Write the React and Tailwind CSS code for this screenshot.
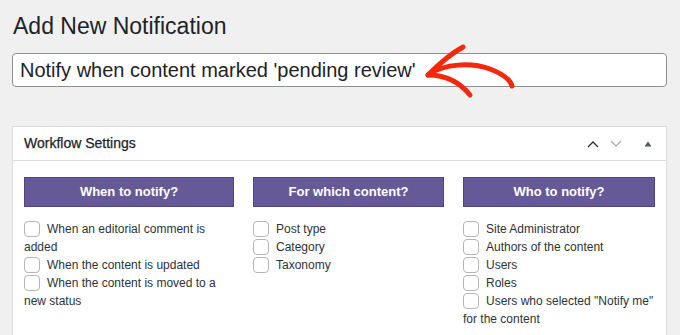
import React from "react";

function Box({ children }) {
  return (
    <div className="leading-[18px]">
      <span className="inline-block w-[16px] h-[16px] align-[-4px] mr-[7px] rounded-[4px] border border-[#b4b5b8] bg-white"></span>
      {children}
    </div>
  );
}

function Col({ title, items }) {
  return (
    <div>
      <div className="h-[30px] flex items-center justify-center bg-[#655997] border border-[#4f4585] text-white font-bold text-[13px]">
        {title}
      </div>
      <div className="mt-[13px] text-[12px] text-[#2c3338]">
        {items.map((t) => (
          <Box key={t}>{t}</Box>
        ))}
      </div>
    </div>
  );
}

export default function App() {
  return (
    <div
      className="w-[680px] h-[335px] overflow-hidden bg-[#f0f0f1] relative"
      style={{ fontFamily: '"Liberation Sans", Arial, sans-serif' }}
    >
      <div className="pl-[12px] pr-[13px]">
        <h1 className="pt-[12px] pl-[1px] text-[23px] leading-[29px] text-[#1d2327] font-normal">
          Add New Notification
        </h1>
        <div className="mt-[12px] h-[34px] bg-white border border-[#8c8f94] rounded-[4px] flex items-center pl-[7px] text-[20px] text-[#1d2327]">
          Notify when content marked 'pending review'
        </div>
        <div className="mt-[39px] bg-white border border-[#dcdcde] h-[260px]">
          <div className="h-[34px] border-b border-[#dcdcde] flex items-center pl-[11px] pr-[14px]">
            <span className="text-[14px] text-[#1d2327] flex-1 [-webkit-text-stroke:0.25px_#1d2327]">Workflow Settings</span>
            <svg width="12" height="8" viewBox="0 0 12 8" className="mr-[11px]">
              <path d="M1 7 L6 2 L11 7" fill="none" stroke="#2c3338" strokeWidth="1.3" />
            </svg>
            <svg width="12" height="8" viewBox="0 0 12 8" className="mr-[22px]">
              <path d="M1 1 L6 6 L11 1" fill="none" stroke="#a7aaad" strokeWidth="1.2" />
            </svg>
            <svg width="8" height="6" viewBox="0 0 8 6">
              <path d="M0.5 5.5 L4 0.5 L7.5 5.5 Z" fill="#50575e" />
            </svg>
          </div>
          <div className="pt-[16px] pl-[11px] grid grid-cols-[210px_191px_192px] gap-x-[19px]">
            <Col
              title="When to notify?"
              items={[
                "When an editorial comment is added",
                "When the content is updated",
                "When the content is moved to a new status",
              ]}
            />
            <Col title="For which content?" items={["Post type", "Category", "Taxonomy"]} />
            <Col
              title="Who to notify?"
              items={[
                "Site Administrator",
                "Authors of the content",
                "Users",
                "Roles",
                'Users who selected "Notify me" for the content',
              ]}
            />
          </div>
        </div>
      </div>
      <svg
        className="absolute left-0 top-0 pointer-events-none"
        width="680"
        height="335"
        viewBox="0 0 680 335"
      >
        <g fill="none" stroke="#f5270c" strokeWidth="5" strokeLinecap="round" strokeLinejoin="round">
          <path d="M463 47 C452 53 440 63 428 75" />
          <path d="M428 75 C442 75 458 80 470 95" />
          <path d="M429 74 C445 64 470 62 490 69 C503 74 510 79 512 86" />
        </g>
      </svg>
    </div>
  );
}
